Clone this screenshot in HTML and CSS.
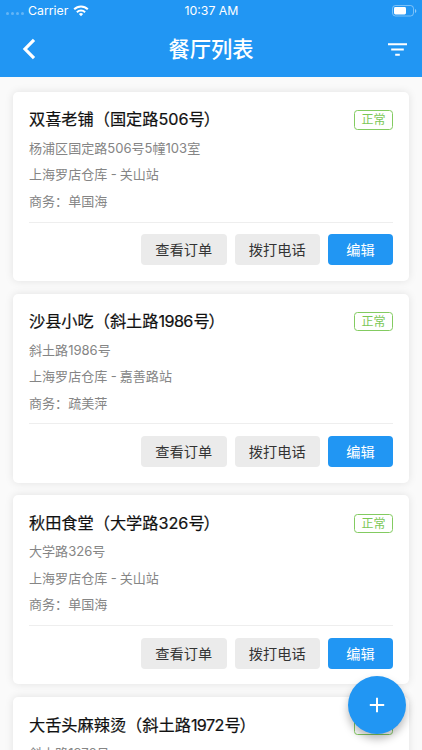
FILE: index.html
```html
<!DOCTYPE html>
<html lang="zh-CN">
<head>
<meta charset="utf-8">
<title>餐厅列表</title>
<link rel="stylesheet" href="styles.css">
</head>
<body>
<header class="header">
  <div class="status">
    <div class="carrier"><span class="dots"><i></i><i></i><i></i><i></i></span><span>Carrier</span>
      <svg class="wifi" width="16" height="12" viewBox="0 0 16 12"><path d="M8 11.300 5.900 9.100a3 3 0 0 1 4.200 0z" fill="#fff"/><path d="M3.900 7.200a5.800 5.800 0 0 1 8.200 0M1.200 4.300a9.600 9.600 0 0 1 13.600 0" fill="none" stroke="#fff" stroke-width="2"/></svg>
    </div>
    <div class="time">10:37 AM</div>
    <svg class="battery" width="25" height="12" viewBox="0 0 25 12"><rect x=".5" y=".5" width="21" height="10.500" rx="3" fill="none" stroke="#fff" stroke-opacity=".4"/><rect x="2" y="2" width="12" height="7.500" rx="1.400" fill="#fff"/><path d="M23 4v4c1.800-.7 1.800-3.300 0-4z" fill="#fff" fill-opacity=".5"/></svg>
  </div>
  <nav class="nav">
    <svg class="back" width="14" height="22" viewBox="0 0 14 22"><path d="M12 1.800 3 11l9 9.200" fill="none" stroke="#fff" stroke-width="3.200"/></svg>
    <h1>餐厅列表</h1>
    <svg class="filter" width="19" height="13" viewBox="0 0 19 13"><path d="M0 1.200h19M3.200 6.600h12.600M7.200 11.700h4.600" stroke="#fff" stroke-width="2"/></svg>
  </nav>
</header>
<main class="list">
  <article class="card">
    <div class="title"><h2>双喜老铺（国定路506号<span class="close">）</span></h2><span class="tag">正常</span></div>
    <p>杨浦区国定路506号5幢103室</p><p>上海罗店仓库<span class="dash"> - </span>关山站</p><p>商务：单国海</p>
    <div class="actions"><button>查看订单</button><button>拨打电话</button><button class="primary">编辑</button></div>
  </article>
  <article class="card">
    <div class="title"><h2>沙县小吃（斜土路<span class="number">1986</span>号<span class="close">）</span></h2><span class="tag">正常</span></div>
    <p>斜土路1986号</p><p>上海罗店仓库<span class="dash"> - </span>嘉善路站</p><p>商务：疏美萍</p>
    <div class="actions"><button>查看订单</button><button>拨打电话</button><button class="primary">编辑</button></div>
  </article>
  <article class="card">
    <div class="title"><h2>秋田食堂（大学路326号<span class="close">）</span></h2><span class="tag">正常</span></div>
    <p>大学路326号</p><p>上海罗店仓库<span class="dash"> - </span>关山站</p><p>商务：单国海</p>
    <div class="actions"><button>查看订单</button><button>拨打电话</button><button class="primary">编辑</button></div>
  </article>
  <article class="card">
    <div class="title"><h2>大舌头麻辣烫（斜土路<span class="number">1972</span>号<span class="close">）</span></h2><span class="tag">正常</span></div>
    <p>斜土路1972号</p>
  </article>
</main>
<button class="fab" aria-label="新增"><svg width="16" height="16" viewBox="0 0 16 16"><path d="M8 .8v14.400M.8 8h14.400" stroke="#fff" stroke-width="2"/></svg></button>
</body>
</html>
```

FILE: styles.css
```css
* { box-sizing: border-box; }
body { margin: 0; height: 750px; overflow: hidden; display: flex; flex-direction: column; background: #fafafa; font-family: Inter, "Noto Sans CJK SC", sans-serif; }
svg { display: block; flex: none; }
h1, h2, p { margin: 0; font-weight: 400; white-space: nowrap; }
.header { height: 77.300px; flex: none; background: #2196f3; color: #fff; }
.status { height: 21px; display: grid; grid-template-columns: 1fr auto 1fr; align-items: center; padding: 0 5px 0 6px; font-size: 12.300px; }
.carrier { display: flex; align-items: center; gap: 4px; }
.wifi { margin-left: 1px; }
.dots { display: flex; gap: 2px; padding-top: 6px; }
.dots i { width: 3px; height: 3px; border-radius: 50%; background: #fff; opacity: .3; }
.battery { justify-self: end; }
.nav { height: 56px; display: grid; grid-template-columns: 1fr auto 1fr; align-items: center; padding: 0 15px 0 22px; }
.nav h1 { font-size: 21.300px; font-weight: 500; line-height: 32px; margin-left: -7px; }
.filter { justify-self: end; }
.list { flex: 1; min-height: 0; overflow: hidden; padding: 14.700px 13px 0; display: flex; flex-direction: column; gap: 12.700px; }
.card { flex: none; height: 189px; padding: 13px 16px 0; background: #fff; border-radius: 5px; box-shadow: 0 0 8px rgba(0,0,0,.1); }
.title { height: 30px; display: flex; align-items: center; justify-content: space-between; }
.title h2 { font-size: 16.200px; line-height: 24px; margin-top: -1px; color: #111; -webkit-text-stroke: .2px #111; }
.number { letter-spacing: -.6px; margin-right: .6px; }
.close { margin-left: -1px; }
.tag { width: 39px; height: 19.500px; border: 1px solid #83cb61; border-radius: 3.500px; color: #7ac756; font-size: 12px; line-height: 18px; text-align: center; }
.card p { font-size: 13.050px; line-height: 26.500px; color: #858585; }
.dash { letter-spacing: -.3px; }
.actions { margin-top: 7.300px; border-top: 1px solid #eee; padding-top: 11.400px; display: flex; justify-content: flex-end; gap: 8px; }
.actions button { width: 85.500px; height: 31px; padding: 0; border: 0; border-radius: 4px; background: #ebebeb; color: #333; font: 14.200px/31px Inter, "Noto Sans CJK SC", sans-serif; }
.actions .primary { width: 65px; background: #2196f3; color: #fff; }
.fab { position: absolute; left: 348px; top: 676px; width: 58px; height: 58px; border: 0; padding: 0; border-radius: 50%; background: #2196f3; display: grid; place-items: center; box-shadow: 0 5px 9px rgba(0,0,0,.28); }
```
